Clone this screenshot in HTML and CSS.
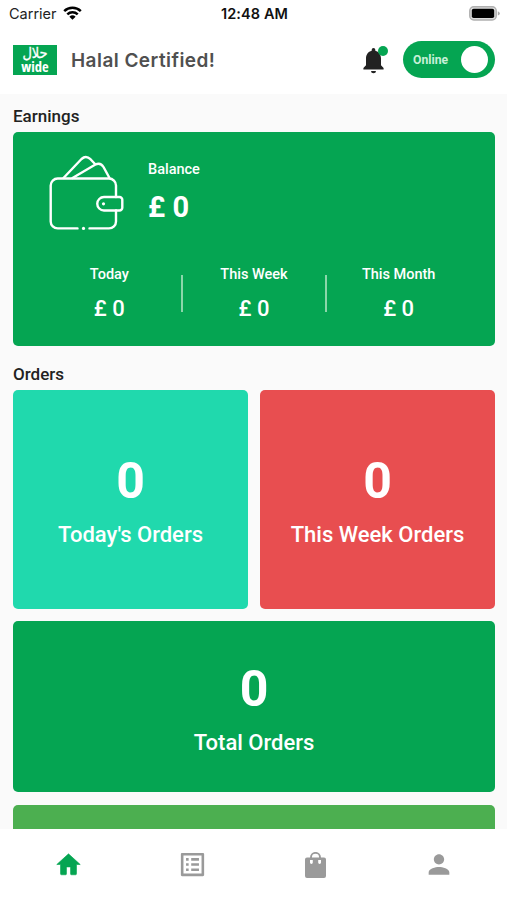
FILE: index.html
```html
<!DOCTYPE html>
<html lang="en">
<head>
<meta charset="utf-8">
<title>Halal Certified!</title>
<link rel="stylesheet" href="styles.css">
</head>
<body>
<div class="status">
  <div class="carrier"><span>Carrier</span>
    <svg width="19" height="14" viewBox="0 0 19 14"><g fill="none" stroke="#000" stroke-width="2.5"><path d="M1.2 5.1a12 12 0 0 1 16.6 0"/><path d="M4.3 8.4a7.5 7.5 0 0 1 10.4 0"/></g><path d="M6.4 10.7a4.5 4.5 0 0 1 6.2 0L9.5 13.8z"/></svg>
  </div>
  <div class="time">12:48 AM</div>
  <svg class="battery" width="31" height="15" viewBox="0 0 31 15"><rect x=".8" y=".8" width="26.4" height="13.2" rx="4" fill="#ddd" stroke="#b0b0b0" stroke-width="1.5"/><rect x="2.8" y="2.8" width="22.4" height="9.2" rx="1.8"/><path d="M28.8 5.2q2 .8 2 2.2t-2 2.2z" fill="#aaa"/></svg>
</div>
<header class="header">
  <div class="logo"><span class="logo-ar" lang="ar" dir="rtl">حلال</span><span class="logo-en">wide</span></div>
  <h1>Halal Certified!</h1>
  <div class="bell">
    <svg width="21" height="26" viewBox="0 0 21 26" fill="#222"><path d="M10.5 0a1.8 1.8 0 0 0-1.8 1.8v.9C5.1 3.6 3 6.700 3 10.500V17.300L.4 20v1.600h20.200V20L18 17.300v-6.800c0-3.800-2.100-6.900-5.700-7.800v-.9A1.800 1.800 0 0 0 10.500 0zM8 22.900h5a2.500 2.300 0 0 1-5 0z"/></svg>
    <i class="dot"></i>
  </div>
  <div class="toggle"><span>Online</span><i class="knob"></i></div>
</header>
<main class="content">
  <h2>Earnings</h2>
  <section class="earnings">
    <div class="balance">
      <svg width="75" height="76" viewBox="0 0 75 76" fill="none" stroke="#fff" stroke-width="2.400" stroke-linecap="round" stroke-linejoin="round"><path d="M28.500 73.400H8.700a7 7 0 0 1-7-7V30.500a7 7 0 0 1 7-7H60a7 7 0 0 1 7 7V42M67 55.500V66.400a7 7 0 0 1-7 7H40.500"/><path d="M60.500 42H70.500a2.800 2.800 0 0 1 2.800 2.800V52.700a2.800 2.800 0 0 1-2.800 2.800H55a6.750 6.750 0 0 1 0-13.500z"/><path d="M14.500 23L32.500 4Q37 0 41.500 4.200L46.500 9.500M23.500 23L46 9.800Q51.500 7 54.500 12L60.500 23"/><circle cx="34.500" cy="73.400" r="1.600" fill="#fff" stroke="none"/><circle cx="54.500" cy="48.800" r="1.600" fill="#fff" stroke="none"/></svg>
      <div><div class="label">Balance</div><div class="total">£ 0</div></div>
    </div>
    <div class="periods">
      <div class="period"><div class="label">Today</div><div class="amount">£ 0</div></div>
      <div class="period"><div class="label">This Week</div><div class="amount">£ 0</div></div>
      <div class="period"><div class="label">This Month</div><div class="amount">£ 0</div></div>
    </div>
  </section>
  <h2 class="orders-title">Orders</h2>
  <section class="orders">
    <div class="card teal"><b>0</b><span>Today's Orders</span></div>
    <div class="card red"><b>0</b><span>This Week Orders</span></div>
    <div class="card wide"><b>0</b><span>Total Orders</span></div>
    <div class="card wide light"></div>
  </section>
</main>
<nav class="nav">
  <a class="active"><svg width="29" height="29" viewBox="0 0 24 24"><path d="M10.300 19.800v-5.800h3.400v5.800a.8.800 0 0 0 .8.700h3.300a.8.800 0 0 0 .8-.8v-7.700H21.700L12 3.200 2.300 12H5.400v7.700a.8.800 0 0 0 .8.800h3.300a.8.800 0 0 0 .8-.7z" stroke="currentColor" stroke-width=".5" stroke-linejoin="round"/></svg></a>
  <a><svg width="31" height="31" viewBox="0 0 24 24"><path d="M19 5v14H5V5h14m1.100-2H3.900c-.5 0-.9.400-.9.900v16.200c0 .4.400.9.900.9h16.200c.4 0 .9-.5.900-.9V3.900c0-.5-.5-.9-.9-.9zM11 7h6v2h-6V7zm0 4h6v2h-6v-2zm0 4h6v2h-6v-2zM7 7h2v2H7V7zm0 4h2v2H7v-2zm0 4h2v2H7v-2z"/></svg></a>
  <a><svg width="21" height="26" viewBox="0 0 21 26"><path d="M6 8V5.200a4.500 4.300 0 0 1 9 0V8" fill="none" stroke="currentColor" stroke-width="1.900"/><path fill-rule="evenodd" d="M2 5.500H19a2 2 0 0 1 2 2V24a2 2 0 0 1-2 2H2a2 2 0 0 1-2-2V7.500a2 2 0 0 1 2-2zM5 8v2.500a1.400 1.400 0 0 0 2.800 0V8zM13.200 8v2.500a1.400 1.400 0 0 0 2.800 0V8z"/></svg></a>
  <a><svg width="32" height="31" viewBox="0 0 24 24"><path d="M12 12c2.210 0 4-1.790 4-4s-1.790-4-4-4-4 1.790-4 4 1.790 4 4 4zm0 2c-2.670 0-8 1.340-8 4v2h16v-2c0-2.660-5.330-4-8-4z"/></svg></a>
</nav>
</body>
</html>
```
FILE: styles.css
```css
* { box-sizing: border-box; }
body {
  margin: 0;
  height: 900px;
  overflow: hidden;
  display: flex;
  flex-direction: column;
  background: #fff;
  font-family: Roboto, sans-serif;
  font-weight: 500;
  color: #222;
}
svg { display: block; flex: none; }
.status {
  height: 28px;
  flex: none;
  display: grid;
  grid-template-columns: 1fr auto 1fr;
  align-items: center;
  padding: 0 7px 1px 9px;
  font: 400 14.500px/20px Inter, sans-serif;
}
.carrier { display: flex; gap: 6px; align-items: center; color: #222; }
.carrier svg { margin-top: -2px; }
.time { font-weight: 600; letter-spacing: .1px; color: #111; }
.battery { justify-self: end; }
.header {
  height: 66px;
  flex: none;
  display: flex;
  align-items: center;
  padding: 0 12px 0 13px;
}
.logo {
  width: 44px;
  height: 30px;
  margin-bottom: 3px;
  background: #05a552;
  color: #fff;
  display: flex;
  flex-direction: column;
  align-items: center;
}
.logo-ar {
  font: 400 13px/15px "DejaVu Sans", sans-serif;
  height: 15px;
  -webkit-text-stroke: .3px #fff;
  transform: scaleY(1.15);
}
.logo-en { font: 700 14.500px/14px "Open Sans", sans-serif; font-stretch: 75%; height: 15px; }
h1 {
  margin: 0 auto 1px 14px;
  font: 600 19px/24px Inter, sans-serif;
  letter-spacing: .45px;
  color: #505050;
}
.bell { position: relative; margin: 0 19px 1px 0; }
.dot {
  position: absolute;
  right: -4px;
  top: -2px;
  width: 10px;
  height: 10px;
  border-radius: 50%;
  background: #05a552;
}
.toggle {
  width: 92px;
  height: 37px;
  margin-bottom: 3px;
  border-radius: 19px;
  background: #05a552;
  display: flex;
  align-items: center;
  justify-content: space-between;
  padding: 0 7px 0 10px;
  font-size: 12.200px;
  font-weight: 700;
  color: #c8f0d8;
}
.knob { width: 27px; height: 27px; border-radius: 50%; background: #fff; }
.content {
  flex: 1;
  min-height: 0;
  overflow: hidden;
  background: #fafafa;
  padding: 12px 12px 0 13px;
}
h2 { margin: 0; font-size: 17px; line-height: 20px; font-weight: 500; }
.earnings {
  height: 214px;
  margin-top: 5.600px;
  padding: 23.400px 24px 0;
  border-radius: 5px;
  background: #05a552;
  color: #fff;
}
.balance { display: flex; gap: 24px; padding-left: 12px; height: 76px; }
.label { font-size: 14.500px; line-height: 18px; }
.balance .label { margin-top: 6px; }
.total { font-size: 29px; line-height: 34px; font-weight: 700; margin-top: 11px; }
.periods { display: grid; grid-template-columns: repeat(3, 1fr); margin-top: 35px; }
.period { text-align: center; position: relative; }
.period + .period::before {
  content: "";
  position: absolute;
  left: -1px;
  top: 9px;
  width: 2px;
  height: 37px;
  background: #8bd7aa;
}
.amount { font-size: 22px; line-height: 26px; margin-top: 12px; }
.orders-title { margin-top: 18px; }
.orders {
  margin-top: 6px;
  display: grid;
  grid-template-columns: 1fr 1fr;
  grid-template-rows: 219.400px 171px 100px;
  gap: 12.500px 12px;
}
.card {
  border-radius: 5px;
  color: #fff;
  display: flex;
  flex-direction: column;
  align-items: center;
  justify-content: center;
  padding-top: 1.200px;
  background: #05a552;
}
.card b { font-size: 50px; line-height: 58px; font-weight: 700; }
.card span { font-size: 22px; line-height: 26px; margin-top: 12px; }
.teal { background: #20d9ad; }
.red { background: #e84e50; }
.wide { grid-column: 1 / -1; }
.light { background: #4caf50; }
.nav {
  height: 71px;
  flex: none;
  display: grid;
  grid-template-columns: repeat(4, 1fr);
  padding: 0 6px 0 7px;
  align-items: center;
  justify-items: center;
  background: #fff;
  color: #9a9a9a;
}
.nav svg { fill: currentColor; }
.nav .active { color: #05a552; }
```
